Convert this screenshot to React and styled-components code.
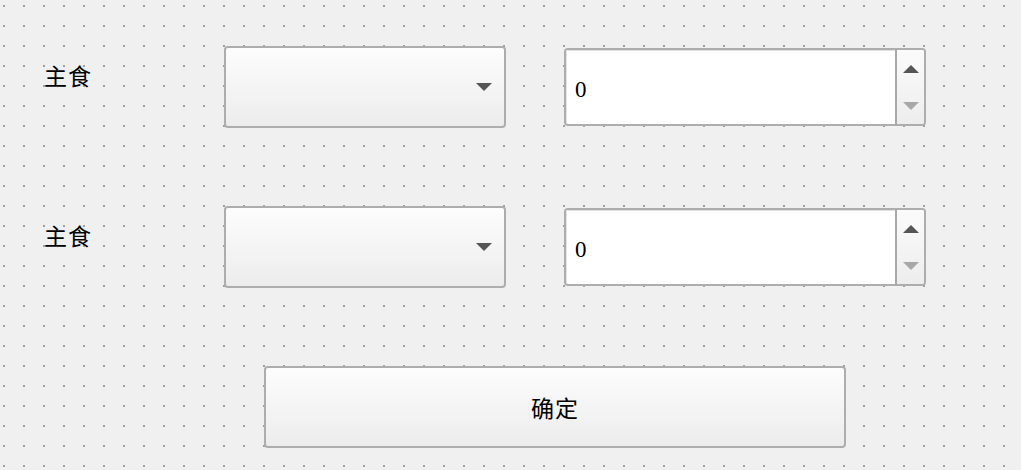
import React from 'react';
import styled, { createGlobalStyle } from 'styled-components';

const GlobalStyle = createGlobalStyle`
  html, body {
    margin: 0;
    height: 100%;
  }

  body {
    background-color: #f0f0f0;
    background-image: conic-gradient(at 2px 2px, transparent 75%, #a0a0a0 0);
    background-size: 20px 20px;
    background-position: 3px 5px;
    font-family: "Noto Sans CJK SC", "Liberation Sans", sans-serif;
    color: #000;
  }
`;

const rows = [
  { id: 1, label: '主食', value: 0 },
  { id: 2, label: '主食', value: 0 },
];

const App = () => (
  <>
    <GlobalStyle />
    <Form>
      {rows.map(row => (
        <Row key={row.id}>
          <Label>{row.label}</Label>
          <ComboBox>
            <Caret />
          </ComboBox>
          <SpinBox>
            <SpinValue>{row.value}</SpinValue>
            <SpinButtons>
              <Arrow up />
              <Arrow />
            </SpinButtons>
          </SpinBox>
        </Row>
      ))}
      <ButtonRow>
        <Button type="button">确定</Button>
      </ButtonRow>
    </Form>
  </>
);

const Form = styled.div`
  display: flex;
  flex-direction: column;
  gap: 78px;
  padding: 46px 0 0 44px;
`;

const Row = styled.div`
  display: grid;
  grid-template-columns: 122px 282px 362px;
  column-gap: 58px;
  align-items: center;
  height: 82px;
`;

const Label = styled.div`
  align-self: start;
  margin-top: 18px;
  font-size: 23px;
  line-height: 1;
  letter-spacing: 1px;
`;

const raised = `
  box-sizing: border-box;
  border: 2px solid #adadad;
  border-radius: 4px;
  background: linear-gradient(to bottom, #fdfdfd, #ececec);
`;

const ComboBox = styled.div`
  ${raised}
  height: 82px;
  display: flex;
  align-items: center;
  justify-content: flex-end;
  padding-right: 12px;
`;

const Caret = styled.span`
  width: 0;
  height: 0;
  border-left: 8px solid transparent;
  border-right: 8px solid transparent;
  border-top: 8px solid #555;
`;

const SpinBox = styled.div`
  box-sizing: border-box;
  height: 78px;
  display: flex;
  border: 2px solid #adadad;
  border-radius: 4px;
  background: #fff;
  overflow: hidden;
`;

const SpinValue = styled.div`
  flex: 1;
  display: flex;
  align-items: center;
  padding: 4px 0 0 8px;
  font-family: "Liberation Serif", serif;
  font-size: 23px;
  border-top: 1px solid #e3e3e3;
  border-left: 1px solid #e3e3e3;
`;

const SpinButtons = styled.div`
  width: 27px;
  display: flex;
  flex-direction: column;
  align-items: center;
  justify-content: space-around;
  border-left: 2px solid #a8a8a8;
  background: linear-gradient(to bottom, #fbfbfb, #ededed);
`;

const Arrow = styled.span`
  width: 0;
  height: 0;
  border-left: 8px solid transparent;
  border-right: 8px solid transparent;
  ${p => (p.up
    ? 'border-bottom: 8px solid #555;'
    : 'border-top: 8px solid #a8a8a8;')}
`;

const ButtonRow = styled.div`
  padding-left: 220px;
`;

const Button = styled.button`
  ${raised}
  width: 582px;
  height: 82px;
  font-family: "Noto Sans CJK SC", sans-serif;
  font-size: 23px;
  color: #000;
  letter-spacing: 1px;
  cursor: pointer;
`;

export default App;
